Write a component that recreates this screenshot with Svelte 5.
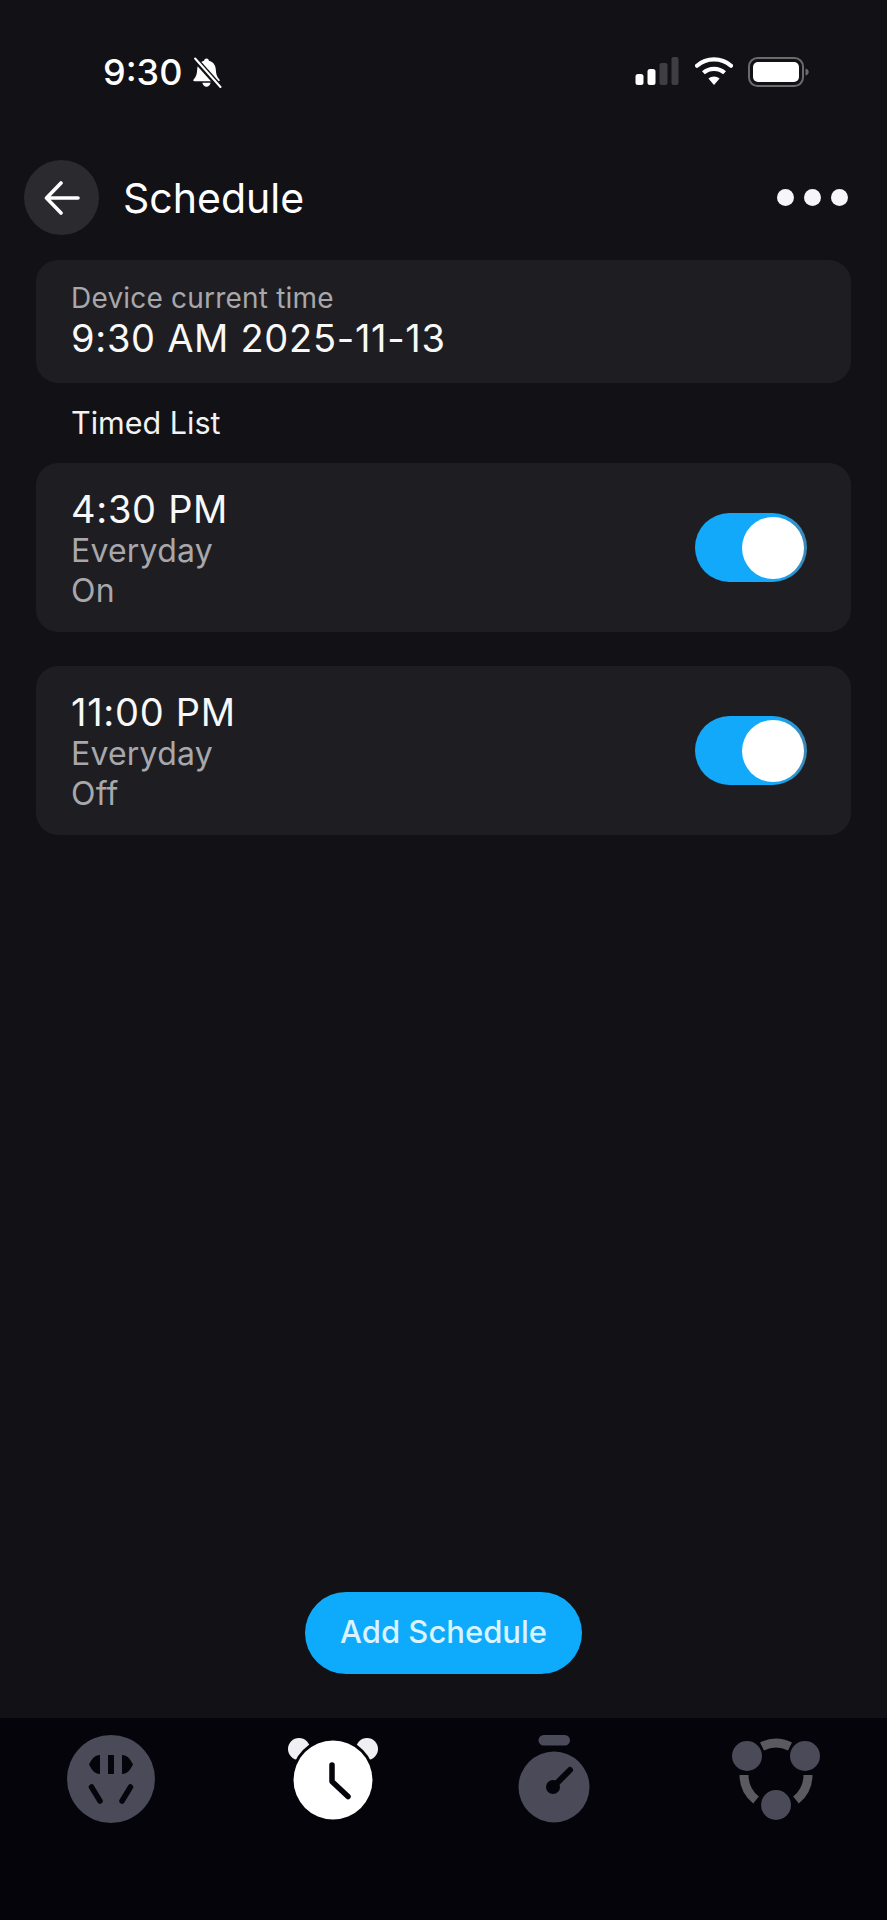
<script>
  const schedules = [
    { time: '4:30 PM', repeat: 'Everyday', action: 'On' },
    { time: '11:00 PM', repeat: 'Everyday', action: 'Off' }
  ];
</script>

<div class="page">
  <div class="status">
    <div class="status-left">
      <span class="clock">9:30</span>
      <svg class="bell" viewBox="0 0 30 30" aria-hidden="true">
        <path d="M15 1.500c1.400 0 2.300 1 2.400 2.200 4 1 6.300 4.200 6.600 8.300.3 4.500 1 7 3.500 9.800.6.800.2 1.700-.8 1.700H3.300c-1 0-1.400-.9-.8-1.700 2.500-2.800 3.200-5.300 3.500-9.800.3-4.100 2.600-7.300 6.600-8.300.1-1.200 1-2.200 2.400-2.200z" fill="#fff"/>
        <path d="M11 25h8c-.3 2.300-2 3.800-4 3.800s-3.700-1.500-4-3.800z" fill="#fff"/>
        <path d="M3 1l25 28" stroke="#111116" stroke-width="5.500"/>
        <path d="M4 1.500l24.500 27.500" stroke="#fff" stroke-width="2" stroke-linecap="round"/>
      </svg>
    </div>
    <div class="status-right">
      <svg class="signal" viewBox="0 0 44 28" aria-hidden="true">
        <rect x="0.500" y="17" width="8" height="11" rx="2.500" fill="#fff"/>
        <rect x="12.500" y="12" width="8" height="16" rx="2.500" fill="#fff"/>
        <rect x="24.500" y="6" width="8" height="22" rx="2" fill="#3f3f43"/>
        <rect x="36.500" y="0" width="7" height="28" rx="2" fill="#3f3f43"/>
      </svg>
      <svg class="wifi" viewBox="0 0 38 28" aria-hidden="true">
        <path d="M19 28l-5.600-6.500c3.200-2.700 8-2.700 11.200 0z" fill="#fff"/>
        <path d="M8.400 15.800c6-5.300 15.200-5.300 21.200 0" fill="none" stroke="#fff" stroke-width="4.200"/>
        <path d="M2 8.700C11.600.2 26.400.2 36 8.700" fill="none" stroke="#fff" stroke-width="4.200" stroke-linecap="round"/>
      </svg>
      <svg class="battery" viewBox="0 0 61 30" aria-hidden="true">
        <rect x="1" y="1" width="54" height="28" rx="8.500" fill="none" stroke="#6b6b6e" stroke-width="2"/>
        <rect x="5" y="5" width="46" height="20" rx="5" fill="#fff"/>
        <path d="M57.500 11.500c2 .4 3.200 1.800 3.200 3.500s-1.200 3.100-3.200 3.500z" fill="#6b6b6e"/>
      </svg>
    </div>
  </div>

  <header class="topbar">
    <button class="back" aria-label="Back">
      <svg viewBox="0 0 36 34" aria-hidden="true">
        <path d="M34 17H2.500M17 2L2.500 17 17 32" fill="none" stroke="#fff" stroke-width="3.600" stroke-linecap="round" stroke-linejoin="round"/>
      </svg>
    </button>
    <h1>Schedule</h1>
    <div class="more" aria-label="More"><i></i><i></i><i></i></div>
  </header>

  <main class="content">
    <section class="card now">
      <div class="sub now-label">Device current time</div>
      <div class="big">9:30 AM 2025-11-13</div>
    </section>

    <div class="list-title">Timed List</div>

    <div class="list">
      {#each schedules as item}
        <section class="card row">
          <div class="row-text">
            <div class="big">{item.time}</div>
            <div class="sub">{item.repeat}</div>
            <div class="sub">{item.action}</div>
          </div>
          <div class="toggle"><span class="knob"></span></div>
        </section>
      {/each}
    </div>

    <div class="action">
      <button class="add">Add Schedule</button>
    </div>
  </main>

  <nav class="tabs">
    <div class="tab">
      <!-- socket face: two side pins, earth bar, two slanted slots -->
      <svg viewBox="0 0 100 100" aria-hidden="true">
        <circle cx="50" cy="50" r="44" fill="#4a4a58"/>
        <path d="M39 26v19c-5.500-.6-7.500-3-11-9.500 3.500-6.500 5.500-8.900 11-9.500zM61 26v19c5.500-.6 7.500-3 11-9.500-3.500-6.500-5.500-8.900-11-9.500z" fill="#04040a"/>
        <rect x="47" y="26" width="6" height="19" fill="#04040a"/>
        <path d="M30.500 58l8.500 14M69.500 58l-8.500 14" stroke="#04040a" stroke-width="5.500" stroke-linecap="round"/>
      </svg>
    </div>
    <div class="tab">
      <!-- alarm clock: bells sit behind a dark ring around the dial -->
      <svg viewBox="0 0 100 100" aria-hidden="true">
        <circle cx="16" cy="20" r="11" fill="#f0f0f2"/>
        <circle cx="84" cy="20" r="11" fill="#f0f0f2"/>
        <circle cx="50" cy="51" r="42.500" fill="#04040a"/>
        <circle cx="50" cy="51" r="39.500" fill="#fff"/>
        <path d="M49 36v16.500l16 15" fill="none" stroke="#04040a" stroke-width="5.500" stroke-linecap="round" stroke-linejoin="round"/>
      </svg>
    </div>
    <div class="tab">
      <!-- stopwatch: crown, dial and a tapered needle -->
      <svg viewBox="0 0 100 100" aria-hidden="true">
        <rect x="34.500" y="6" width="31.500" height="10.500" rx="5.200" fill="#4a4a58"/>
        <circle cx="50" cy="58" r="35.500" fill="#4a4a58"/>
        <circle cx="49" cy="58" r="7" fill="#04040a"/>
        <path d="M49 58l17-17" stroke="#04040a" stroke-width="6" stroke-linecap="round"/>
      </svg>
    </div>
    <div class="tab">
      <!-- three nodes on a broken ring -->
      <svg viewBox="0 0 100 100" aria-hidden="true">
        <path d="M36 17.500a32 32 0 0 1 28 0" fill="none" stroke="#5a5a60" stroke-width="9"/>
        <path d="M18 46a32 32 0 0 0 12 25M82 46a32 32 0 0 1-12 25" fill="none" stroke="#5a5a60" stroke-width="9"/>
        <circle cx="21" cy="27" r="15" fill="#4a4a58"/>
        <circle cx="79" cy="27" r="15" fill="#4a4a58"/>
        <circle cx="50" cy="76" r="15" fill="#4a4a58"/>
      </svg>
    </div>
  </nav>
</div>

<style>
  :global(body) {
    margin: 0;
    background: #111116;
  }

  .page {
    width: 887px;
    height: 1920px;
    display: flex;
    flex-direction: column;
    background: #111116;
    color: #fff;
    font-family: Inter, "Liberation Sans", sans-serif;
  }

  .status {
    height: 160px;
    box-sizing: border-box;
    padding: 56px 78px 0 103px;
    display: flex;
    justify-content: space-between;
    align-items: flex-start;
    flex: none;
  }

  .status-left {
    display: flex;
    align-items: center;
    gap: 9px;
  }

  .clock {
    font-size: 36px;
    line-height: 32px;
    font-weight: 500;
  }

  .bell {
    width: 31px;
    height: 31px;
  }

  .status-right {
    display: flex;
    align-items: flex-start;
    margin-top: 1px;
  }

  .signal {
    width: 44px;
    height: 28px;
    margin-right: 16px;
  }

  .wifi {
    width: 38px;
    height: 28px;
    margin-right: 15px;
  }

  .battery {
    width: 61px;
    height: 30px;
  }

  .topbar {
    height: 75px;
    flex: none;
    display: flex;
    align-items: center;
    padding: 0 39px 0 24px;
  }

  .back {
    width: 75px;
    height: 75px;
    border: 0;
    padding: 0;
    border-radius: 50%;
    background: #2b2b2f;
    display: flex;
    align-items: center;
    justify-content: center;
  }

  .back svg {
    width: 36px;
    height: 34px;
  }

  h1 {
    margin: 0 0 0 24px;
    font-size: 41px;
    font-weight: 400;
    flex: 1;
  }

  .more {
    display: flex;
    gap: 10px;
  }

  .more i {
    width: 17px;
    height: 17px;
    border-radius: 50%;
    background: #f6f6f8;
  }

  .content {
    flex: 1;
    display: flex;
    flex-direction: column;
    padding: 25px 36px 0;
    min-height: 0;
  }

  .card {
    background: #1e1e22;
    border-radius: 22px;
    box-sizing: border-box;
    padding-left: 35px;
  }

  .now {
    height: 123px;
    padding-top: 20px;
  }

  .sub {
    font-size: 32px;
    line-height: 40px;
    letter-spacing: 0.200px;
    color: #a8a8ac;
  }

  .now-label {
    font-size: 28px;
    line-height: 36px;
  }

  .big {
    font-size: 38px;
    line-height: 44px;
    letter-spacing: 0.700px;
    color: #f8f8f8;
  }

  .row-text {
    padding-top: 2px;
  }

  .list-title {
    font-size: 30.500px;
    line-height: 40px;
    margin: 20px 0 20px 35px;
    color: #f2f2f2;
  }

  .list {
    display: flex;
    flex-direction: column;
    gap: 34px;
  }

  .row {
    height: 169px;
    display: flex;
    align-items: center;
    justify-content: space-between;
    padding-right: 44px;
  }

  .toggle {
    width: 112px;
    height: 69px;
    border-radius: 35px;
    background: linear-gradient(to right, #12a9fb 72%, #3f86b2 100%);
    position: relative;
  }

  .knob {
    position: absolute;
    top: 4px;
    right: 3px;
    width: 62px;
    height: 62px;
    border-radius: 50%;
    background: #fff;
  }

  .action {
    margin-top: auto;
    margin-bottom: 44px;
    display: flex;
    justify-content: center;
  }

  .add {
    width: 277px;
    height: 82px;
    border: 0;
    padding: 0 0 3px;
    border-radius: 41px;
    background: #0eaafc;
    color: #d9f3ff;
    font-family: inherit;
    font-size: 31px;
    font-weight: 500;
  }

  .tabs {
    height: 202px;
    flex: none;
    background: #04040a;
    display: grid;
    grid-template-columns: repeat(4, 1fr);
    padding-top: 11px;
    box-sizing: border-box;
  }

  .tab {
    display: flex;
    justify-content: center;
    align-items: flex-start;
  }

  .tab svg {
    width: 100px;
    height: 100px;
  }
</style>
